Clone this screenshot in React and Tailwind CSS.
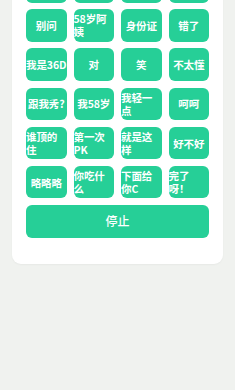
import React from 'react';

// sound buttons, 4 per row; the first row is scrolled mostly out of view
const LABELS = [
  '你好', '哈哈', '再见', '好的',
  '别问', '58岁阿姨', '身份证', '错了',
  '我是36D', '对', '笑', '不太懂',
  '跟我秀?', '我58岁', '我轻一点', '呵呵',
  '谁顶的住', '第一次PK', '就是这样', '好不好',
  '略略略', '你吃什么', '下面给你C', '完了呀！',
];

const FONT = { fontFamily: '"Noto Sans CJK SC", "Noto Sans", sans-serif' };

export default function App() {
  return (
    <div className="min-h-[390px] w-full overflow-hidden bg-[#f0f2ef]" style={FONT}>
      <div className="mx-[12px] -mt-[44px] rounded-[9px] bg-white px-[14px] pt-[14px] pb-[26.5px] shadow-[0_1px_2px_rgba(0,0,0,0.04)]">
        <div className="grid grid-cols-4 gap-x-[7px] gap-y-[6.7px]">
          {LABELS.map((label) => (
            <button
              key={label}
              className="flex h-[32.5px] items-center justify-center rounded-[6px] bg-[#26cf97] text-white"
            >
              <span className="text-left text-[10.5px] font-bold leading-[13px] tracking-[-0.1px]">{label}</span>
            </button>
          ))}
        </div>
        <button className="mt-[6.7px] flex h-[32.5px] w-full items-center justify-center rounded-[6px] bg-[#26cf97] text-[12px] font-medium text-white">
          停止
        </button>
      </div>
    </div>
  );
}
